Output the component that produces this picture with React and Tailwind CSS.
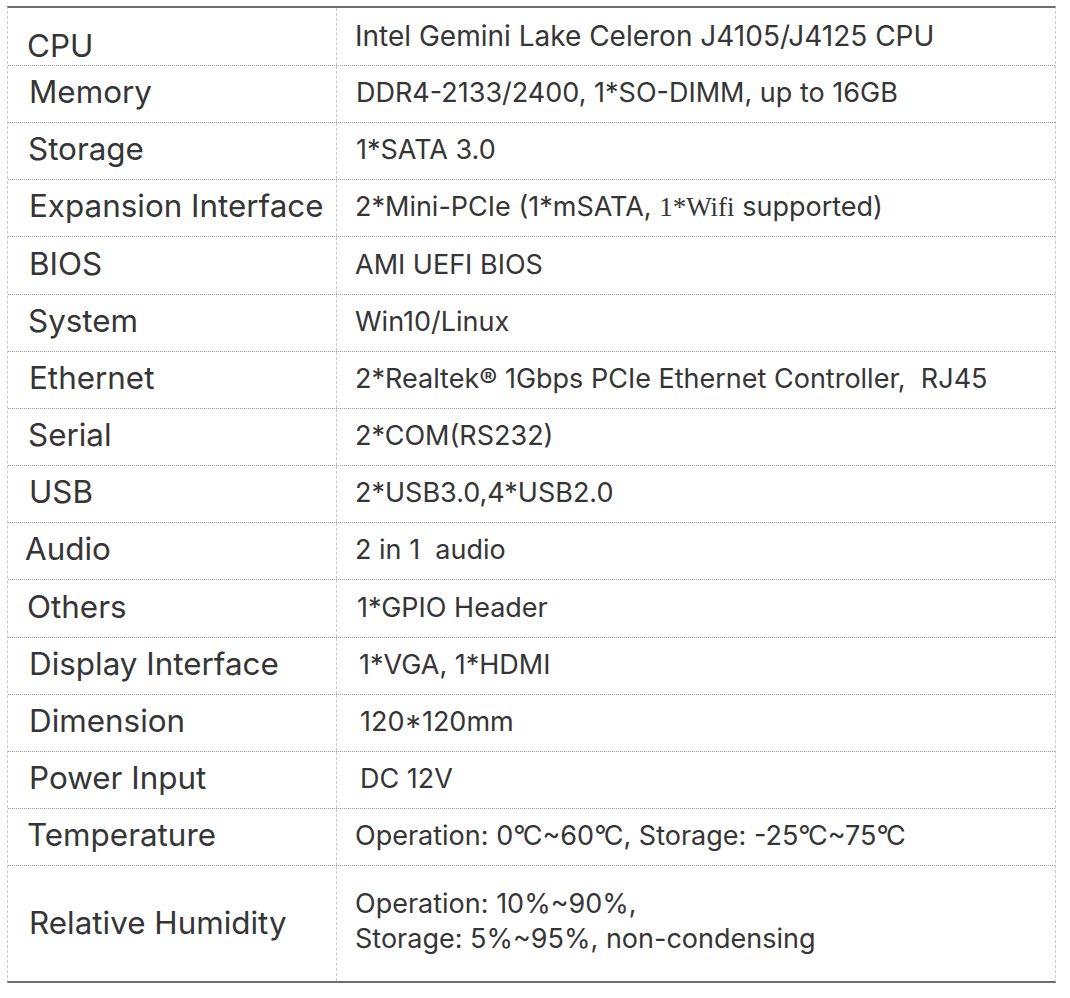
const Deg = () => <span className="tracking-[-0.1em]">°</span>;

const rows = [
  { label: 'CPU', value: 'Intel Gemini Lake Celeron J4105/J4125 CPU', h: 'h-[58px]', lp: 'pl-[19px] pt-[22px]', vp: 'pl-[18px] text-[28px]' },
  { label: 'Memory', value: 'DDR4-2133/2400, 1*SO-DIMM, up to 16GB', h: 'h-[57px]', lp: 'pl-[21px]', vp: 'pl-[19px]' },
  { label: 'Storage', value: '1*SATA 3.0', h: 'h-[57px]', lp: 'pl-[20px]', vp: 'pl-[19px]' },
  {
    label: 'Expansion Interface',
    value: (
      <>
        2*Mini-PCIe (1*mSATA, <span className="font-['Liberation_Serif',serif] tracking-normal">1*Wifi</span> supported)
      </>
    ),
    h: 'h-[57px]',
    lp: 'pl-[21px]',
    vp: 'pl-[18px]',
  },
  { label: 'BIOS', value: 'AMI UEFI BIOS', h: 'h-[58px]', lp: 'pl-[21px]', vp: 'pl-[18px]' },
  { label: 'System', value: 'Win10/Linux', h: 'h-[57px]', lp: 'pl-[20px]', vp: 'pl-[18px]' },
  { label: 'Ethernet', value: '2*Realtek® 1Gbps PCIe Ethernet Controller,  RJ45', h: 'h-[57px]', lp: 'pl-[21px]', vp: 'pl-[18px]' },
  { label: 'Serial', value: '2*COM(RS232)', h: 'h-[57px]', lp: 'pl-[20px]', vp: 'pl-[18px]' },
  { label: 'USB', value: '2*USB3.0,4*USB2.0', h: 'h-[57px]', lp: 'pl-[21px]', vp: 'pl-[18px]' },
  { label: 'Audio', value: '2 in 1  audio', h: 'h-[57px]', lp: 'pl-[17px]', vp: 'pl-[18px]' },
  { label: 'Others', value: '1*GPIO Header', h: 'h-[58px]', lp: 'pl-[19px]', vp: 'pl-[20px]' },
  { label: 'Display Interface', value: '1*VGA, 1*HDMI', h: 'h-[57px]', lp: 'pl-[21px]', vp: 'pl-[22px]' },
  { label: 'Dimension', value: '120*120mm', h: 'h-[57px]', lp: 'pl-[21px]', vp: 'pl-[23px]' },
  { label: 'Power Input', value: 'DC 12V', h: 'h-[57px]', lp: 'pl-[21px]', vp: 'pl-[23px]' },
  {
    label: 'Temperature',
    value: (
      <>
        Operation: 0<Deg />C~60<Deg />C, Storage: -25<Deg />C~75<Deg />C
      </>
    ),
    h: 'h-[57px]',
    lp: 'pl-[19px]',
    vp: 'pl-[18px]',
  },
];

export default function App() {
  return (
    <div className="min-h-[998px] w-[1070px] bg-white pt-[6px] pl-[7px] font-['Inter','Liberation_Sans',sans-serif] text-[#353535]">
      <div className="w-[1049px] border-t-2 border-b-2 border-t-[#6e6e6e] border-b-[#6e6e6e] border-x border-x-[#c9c9c9] [border-left-style:dashed] [border-right-style:dashed]">
        {rows.map((r) => (
          <div key={r.label} className={`flex ${r.h} border-b border-dotted border-b-[#999999]`}>
            <div className={`flex w-[329px] shrink-0 items-center border-r border-dashed border-r-[#c9c9c9] pb-[2px] text-[31.4px] ${r.lp}`}>
              {r.label}
            </div>
            <div className={`flex flex-1 items-center whitespace-pre pb-[1px] text-[27px] ${r.vp}`}>
              {r.value}
            </div>
          </div>
        ))}
        <div className="flex h-[115px]">
          <div className="flex w-[329px] shrink-0 items-center border-r border-dashed border-r-[#c9c9c9] pl-[21px] text-[31.4px]">
            Relative Humidity
          </div>
          <div className="flex flex-1 flex-col justify-center pl-[18px] pb-[6px] text-[27px] leading-[35px]">
            <span>Operation: 10%~90%,</span>
            <span>Storage: 5%~95%, non-condensing</span>
          </div>
        </div>
      </div>
    </div>
  );
}
